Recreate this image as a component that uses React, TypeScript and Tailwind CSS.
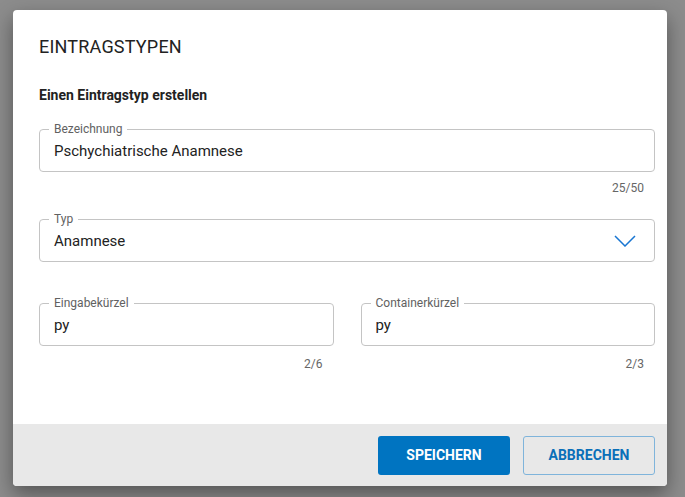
import React from "react";

function Field({ label, value, className = "", chevron = false }: { label: string; value: string; className?: string; chevron?: boolean }) {
  return (
    <div className={`relative h-[43px] rounded-[4px] border border-[#c4c4c4] flex items-center px-[14px] ${className}`}>
      <span className="absolute -top-[8px] left-[9px] bg-white px-[5px] text-[12px] leading-[14px] text-[#616161]">{label}</span>
      <span className="text-[15px] text-[#222] mt-[2px]">{value}</span>
      {chevron && (
        <svg className="absolute right-[18px] top-[15px]" width="22" height="12" viewBox="0 0 22 12" fill="none">
          <path d="M1 1 L11 11 L21 1" stroke="#1976d2" strokeWidth="1.5" />
        </svg>
      )}
    </div>
  );
}

export default function App() {
  return (
    <div className="w-[685px] h-[497px] bg-[#8c8c8c] pt-[10px] pl-[13px]" style={{ fontFamily: "Roboto, 'Liberation Sans', sans-serif" }}>
      <div className="w-[654px] h-[476px] bg-white rounded-[4px] flex flex-col overflow-hidden shadow-[0_8px_20px_rgba(0,0,0,0.4)]">
        <div className="flex-1 pl-[26px] pr-[12px] pt-[25px]">
          <div className="text-[18px] leading-[24px] text-[#222] tracking-[0.2px]">EINTRAGSTYPEN</div>
          <div className="mt-[27px] text-[14px] font-bold text-[#222] leading-[18px]">Einen Eintragstyp erstellen</div>
          <Field label="Bezeichnung" value="Pschychiatrische Anamnese" className="mt-[25px]" />
          <div className="text-right text-[12px] text-[#666] mt-[8px] mr-[11px] leading-[16px]">25/50</div>
          <Field label="Typ" value="Anamnese" chevron className="mt-[23px]" />
          <div className="flex gap-[27px] mt-[41px]">
            <div className="flex-1">
              <Field label="Eingabekürzel" value="py" />
              <div className="text-right text-[12px] text-[#666] mt-[10px] mr-[11px] leading-[16px]">2/6</div>
            </div>
            <div className="flex-1">
              <Field label="Containerkürzel" value="py" />
              <div className="text-right text-[12px] text-[#666] mt-[10px] mr-[11px] leading-[16px]">2/3</div>
            </div>
          </div>
        </div>
        <div className="h-[62px] bg-[#e8e8e8] flex items-center justify-end gap-[13px] pr-[12px]">
          <button className="w-[132px] h-[39px] rounded-[3px] bg-[#0074c1] text-white text-[14px] font-bold">SPEICHERN</button>
          <button className="w-[132px] h-[39px] rounded-[3px] border border-[#7fb4db] text-[#0a6fb8] text-[14px] font-bold">ABBRECHEN</button>
        </div>
      </div>
    </div>
  );
}
